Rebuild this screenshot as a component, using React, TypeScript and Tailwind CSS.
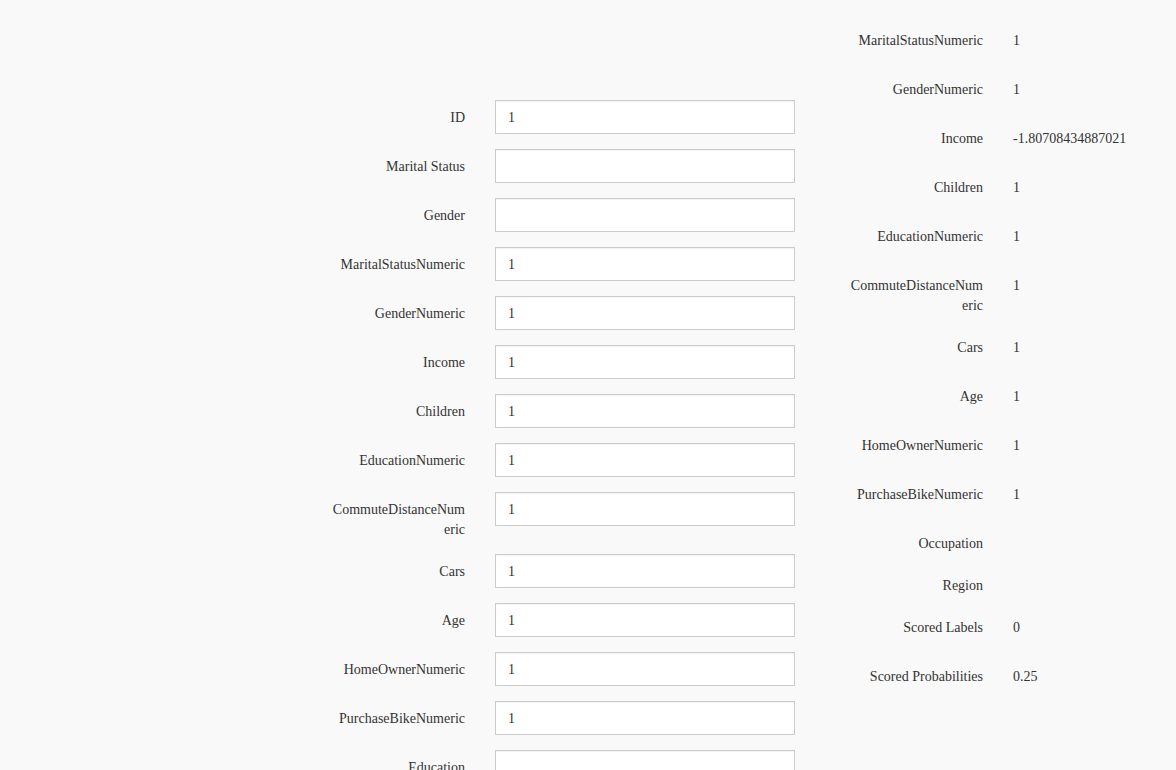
import React from 'react';

const inputs: { label: string; value: string }[] = [
  { label: 'ID', value: '1' },
  { label: 'Marital Status', value: '' },
  { label: 'Gender', value: '' },
  { label: 'MaritalStatusNumeric', value: '1' },
  { label: 'GenderNumeric', value: '1' },
  { label: 'Income', value: '1' },
  { label: 'Children', value: '1' },
  { label: 'EducationNumeric', value: '1' },
  { label: 'CommuteDistanceNumeric', value: '1' },
  { label: 'Cars', value: '1' },
  { label: 'Age', value: '1' },
  { label: 'HomeOwnerNumeric', value: '1' },
  { label: 'PurchaseBikeNumeric', value: '1' },
  { label: 'Education', value: '' },
  { label: 'Occupation', value: '' },
  { label: 'Region', value: '' },
];

const outputs: { label: string; value: string }[] = [
  { label: 'MaritalStatusNumeric', value: '1' },
  { label: 'GenderNumeric', value: '1' },
  { label: 'Income', value: '-1.80708434887021' },
  { label: 'Children', value: '1' },
  { label: 'EducationNumeric', value: '1' },
  { label: 'CommuteDistanceNumeric', value: '1' },
  { label: 'Cars', value: '1' },
  { label: 'Age', value: '1' },
  { label: 'HomeOwnerNumeric', value: '1' },
  { label: 'PurchaseBikeNumeric', value: '1' },
  { label: 'Occupation', value: '' },
  { label: 'Region', value: '' },
  { label: 'Scored Labels', value: '0' },
  { label: 'Scored Probabilities', value: '0.25' },
];

const App: React.FC = () => {
  return (
    <div className="h-[770px] overflow-hidden bg-[#f9f9f9] text-[14px] leading-5 text-[#333] [font-family:Liberation_Serif,serif]">
      <div className="flex">
        {/* Input form */}
        <form className="ml-[330px] w-[465px] pt-[100px]" onSubmit={e => e.preventDefault()}>
          {inputs.map(row => (
            <div key={row.label} className="mb-[15px] flex items-start gap-[30px]">
              <label className="-mb-px w-[135px] shrink-0 break-all pt-[8px] text-right">{row.label}</label>
              <input
                type="text"
                defaultValue={row.value}
                className="h-[34px] w-[300px] border border-[#ccc] bg-white px-3 pt-[2px] text-[14px] text-[#333] outline-none shadow-[inset_0_1px_1px_rgba(0,0,0,0.05)]"
              />
            </div>
          ))}
        </form>

        {/* Scored output */}
        <div className="ml-[53px] w-[328px] pt-[23px]">
          {outputs.map(row => (
            <div key={row.label} className="mb-[15px] flex items-start gap-[30px]">
              <div className="-mb-px w-[135px] shrink-0 break-all pt-[8px] text-right">{row.label}</div>
              {row.value ? <p className="min-h-[34px] pt-[8px] pb-[6px]">{row.value}</p> : <p />}
            </div>
          ))}
        </div>
      </div>
    </div>
  );
};

export default App;
